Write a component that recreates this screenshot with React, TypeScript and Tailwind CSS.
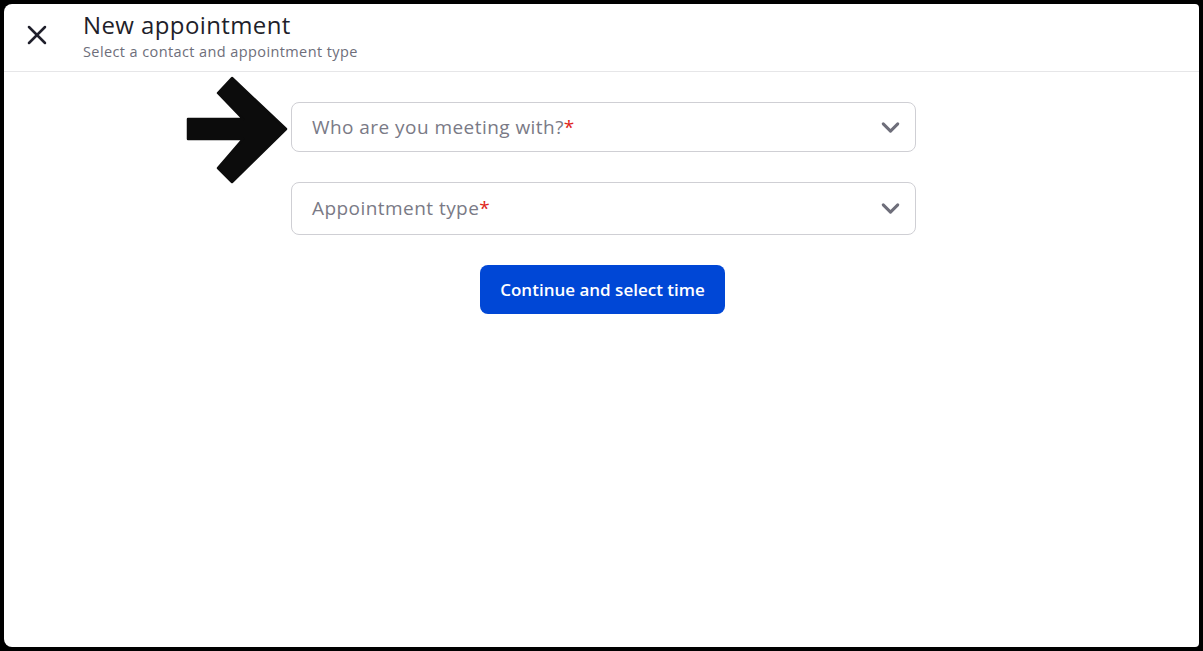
import { ChevronDown, X } from 'lucide-react';

function SelectField({ label, className }: { label: string; className?: string }) {
  return (
    <button
      type="button"
      className={`flex w-[625px] items-center justify-between rounded-lg border border-[#cfcfd4] bg-white pl-[20px] pr-[10px] text-left ${className ?? ''}`}
    >
      <span className="text-[19px] tracking-[0.45px] text-[#7a7a86]">
        {label}
        <span className="text-[#e0261b]">*</span>
      </span>
      <ChevronDown className="h-[29px] w-[29px] text-[#6e6e7a]" strokeWidth={2.5} />
    </button>
  );
}

export default function App() {
  return (
    <div className="h-[651px] w-[1203px] bg-black p-1 font-['Open_Sans',sans-serif]">
      <div className="relative flex h-full flex-col rounded-l-lg rounded-r-sm bg-white">
        {/* header */}
        <div className="flex h-[68px] items-start border-b border-[#e6e6e8]">
          <button type="button" className="ml-[17px] mt-[15px] text-[#1f1f2b]">
            <X className="h-8 w-8" strokeWidth={1.9} />
          </button>
          <div className="ml-[30px] mt-[5px]">
            <h1 className="text-[24px] leading-[32px] tracking-[0.4px] text-[#1f1f2b]">New appointment</h1>
            <p className="mt-[1px] text-[14.5px] leading-[20px] tracking-[0.4px] text-[#6e6e7a]">
              Select a contact and appointment type
            </p>
          </div>
        </div>

        {/* form */}
        <div className="mx-auto mt-[30px] flex flex-col items-center gap-[30px] pl-[4px]">
          <SelectField label="Who are you meeting with?" className="h-[50px]" />
          <SelectField label="Appointment type" className="h-[53px]" />
          <button
            type="button"
            className="-ml-[2px] h-[49px] rounded-lg bg-[#0047d6] px-5 text-[17px] font-semibold text-white"
          >
            Continue and select time
          </button>
        </div>

        {/* pointer annotation */}
        <svg className="absolute left-[175px] top-[65px]" width="112" height="118" viewBox="179 69 112 118">
          <polygon
            points="188,119 243,119 218,93 232,78 286,129 232,182 218,168 243,139 188,139"
            fill="#0c0c0c"
            stroke="#0c0c0c"
            strokeWidth="2.5"
            strokeLinejoin="round"
          />
        </svg>
      </div>
    </div>
  );
}
